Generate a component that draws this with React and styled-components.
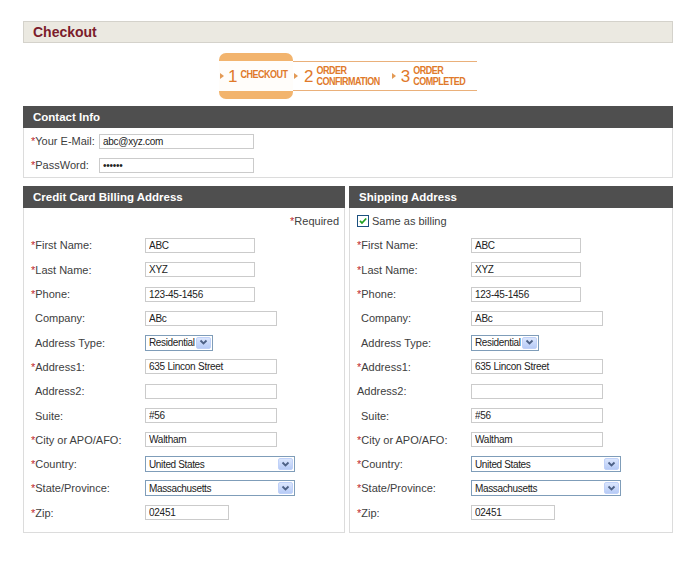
import React from "react";
import styled, { createGlobalStyle } from "styled-components";

const GlobalStyle = createGlobalStyle`
  body {
    margin: 0;
    background: #fff;
    font-family: "Liberation Sans", Arial, sans-serif;
  }
`;

const Page = styled.div`
  width: 650px;
  padding: 21px 0 0 23px;
`;

const TitleBar = styled.div`
  height: 20px;
  border: 1px solid #d4d2cb;
  background: #ebe9e1;
  display: flex;
  align-items: center;
  padding-left: 9px;
`;

const Title = styled.h1`
  margin: 0;
  font-size: 14px;
  font-weight: bold;
  color: #7b1c2b;
`;

const StepsWrap = styled.div`
  display: flex;
  justify-content: center;
  margin: 10px 0 7px;
`;

const Steps = styled.div`
  display: flex;
  height: 46px;
`;

const ActiveTab = styled.div`
  width: 74px;
  background: #f2b46e;
  border-radius: 7px;
  padding: 8px 0;
  box-sizing: border-box;
`;

const Band = styled.div`
  height: 30px;
  display: flex;
  align-items: center;
  background: ${(p) => (p.$active ? "#fffdfa" : "transparent")};
  border-top: ${(p) => (p.$active ? "none" : "1px solid #eab07a")};
  border-bottom: ${(p) => (p.$active ? "none" : "1px solid #eab07a")};
  box-sizing: border-box;
  margin: ${(p) => (p.$active ? "0" : "8px 0")};
  width: ${(p) => (p.$active ? "auto" : "184px")};
  padding-left: 1px;
`;

const Arrow = styled.span`
  width: 0;
  height: 0;
  border-top: 3px solid transparent;
  border-bottom: 3px solid transparent;
  border-left: 4px solid #e39a55;
  margin-right: ${(p) => p.$gap}px;
  margin-left: ${(p) => p.$before || 0}px;
`;

const StepNum = styled.span`
  font-size: 17px;
  color: #e0792a;
  margin-right: 3px;
  line-height: 1;
`;

const StepText = styled.span`
  display: inline-block;
  font-family: "Liberation Sans Narrow", "Liberation Sans", sans-serif;
  font-weight: bold;
  font-size: 9px;
  letter-spacing: -0.5px;
  line-height: 9.5px;
  color: #e0792a;
  white-space: nowrap;
  transform: scaleY(1.15);
`;

const Section = styled.section`
  display: flex;
  flex-direction: column;
`;

const SectionHeader = styled.div`
  height: 22px;
  background: #4f4f4f;
  color: #fff;
  font-weight: bold;
  font-size: 11.5px;
  padding-left: 10px;
  display: flex;
  align-items: center;
`;

const SectionBody = styled.div`
  border: 1px solid #dcdcdc;
  border-top: none;
  padding: ${(p) => p.$pad};
`;

const Columns = styled.div`
  display: grid;
  grid-template-columns: 322px 324px;
  column-gap: 4px;
  margin-top: 8px;
`;

const Row = styled.div`
  height: ${(p) => p.$h || 24.3}px;
  display: flex;
  align-items: center;
  justify-content: ${(p) => (p.$right ? "flex-end" : "flex-start")};
  font-size: 11px;
  color: #404040;
`;

const Label = styled.label`
  width: ${(p) => p.$w}px;
  flex-shrink: 0;
  font-size: 11px;
  color: #404040;
  padding-left: ${(p) => (p.$indent ? 4 : 0)}px;
  box-sizing: border-box;
  white-space: nowrap;
`;

const Star = styled.span`
  color: #c0282d;
`;

const TextInput = styled.input`
  width: ${(p) => p.$w}px;
  height: 15px;
  box-sizing: border-box;
  border: 1px solid #cbcbcb;
  padding: 0 3px;
  margin: 0;
  font-family: "Liberation Sans", Arial, sans-serif;
  font-size: 10px;
  letter-spacing: -0.25px;
  color: #222;
  background: #fff;
  outline: none;
`;

const Select = styled.div`
  width: ${(p) => p.$w}px;
  height: 16px;
  box-sizing: border-box;
  border: 1px solid #7f9db9;
  display: flex;
  align-items: center;
  padding: 0 1px 0 3px;
  font-size: 10px;
  letter-spacing: -0.35px;
  color: #222;
  background: #fff;
  white-space: nowrap;
`;

const SelectBtn = styled.span`
  margin-left: auto;
  flex-shrink: 0;
  width: 15px;
  height: 12px;
  box-sizing: border-box;
  border: 1px solid #c0d1f8;
  border-radius: 2px;
  background: linear-gradient(#dbe6fd, #b7cbf6);
  display: flex;
  align-items: center;
  justify-content: center;
`;

const CheckRow = styled.label`
  display: flex;
  align-items: center;
  gap: 3px;
  font-size: 11px;
  color: #404040;
`;

const billing = [
  { label: "First Name:", req: true, value: "ABC", w: 110 },
  { label: "Last Name:", req: true, value: "XYZ", w: 110 },
  { label: "Phone:", req: true, value: "123-45-1456", w: 110 },
  { label: "Company:", value: "ABc", w: 132 },
  { label: "Address Type:", value: "Residential", w: 68, select: true },
  { label: "Address1:", req: true, value: "635 Lincon Street", w: 132 },
  { label: "Address2:", value: "", w: 132 },
  { label: "Suite:", value: "#56", w: 132 },
  { label: "City or APO/AFO:", req: true, value: "Waltham", w: 132 },
  { label: "Country:", req: true, value: "United States", w: 150, select: true },
  { label: "State/Province:", req: true, value: "Massachusetts", w: 150, select: true },
  { label: "Zip:", req: true, value: "02451", w: 84 },
];

const Chevron = () => (
  <svg width="9" height="7" viewBox="0 0 9 7">
    <path d="M1.5 1.5 L4.5 4.5 L7.5 1.5" fill="none" stroke="#4d6185" strokeWidth="1.8" />
  </svg>
);

const CheckIcon = () => (
  <svg width="12" height="12" viewBox="0 0 12 12">
    <rect x="0.5" y="0.5" width="11" height="11" fill="#fff" stroke="#1c5180" />
    <path d="M3 5.8 L5 8 L9.2 3.5" fill="none" stroke="#21a121" strokeWidth="1.8" />
  </svg>
);

function Field({ f, noIndent }) {
  return (
    <Row>
      <Label $w={114} $indent={!f.req && !noIndent}>
        {f.req && <Star>*</Star>}
        {f.label}
      </Label>
      {f.select ? (
        <Select $w={f.w}>
          {f.value}
          <SelectBtn>
            <Chevron />
          </SelectBtn>
        </Select>
      ) : (
        <TextInput $w={f.w} defaultValue={f.value} readOnly />
      )}
    </Row>
  );
}

export default function App() {
  return (
    <Page>
      <GlobalStyle />
      <TitleBar>
        <Title>Checkout</Title>
      </TitleBar>

      <StepsWrap>
        <Steps>
          <ActiveTab>
            <Band $active>
              <Arrow $gap={4} />
              <StepNum>1</StepNum>
              <StepText>CHECKOUT</StepText>
            </Band>
          </ActiveTab>
          <Band>
            <Arrow $gap={6} />
            <StepNum>2</StepNum>
            <StepText>
              ORDER
              <br />
              CONFIRMATION
            </StepText>
            <Arrow $gap={5} $before={12} />
            <StepNum>3</StepNum>
            <StepText>
              ORDER
              <br />
              COMPLETED
            </StepText>
          </Band>
        </Steps>
      </StepsWrap>

      <Section>
        <SectionHeader>Contact Info</SectionHeader>
        <SectionBody $pad="1px 0 0 7px">
          <Row $h={24}>
            <Label $w={68}>
              <Star>*</Star>Your E-Mail:
            </Label>
            <TextInput $w={155} defaultValue="abc@xyz.com" readOnly />
          </Row>
          <Row $h={24}>
            <Label $w={68}>
              <Star>*</Star>PassWord:
            </Label>
            <TextInput $w={155} type="password" defaultValue="abcdef" readOnly />
          </Row>
        </SectionBody>
      </Section>

      <Columns>
        <Section>
          <SectionHeader>Credit Card Billing Address</SectionHeader>
          <SectionBody $pad="1px 5px 7px 7px">
            <Row $right>
              <span>
                <Star>*</Star>Required
              </span>
            </Row>
            {billing.map((f) => (
              <Field key={f.label} f={f} />
            ))}
          </SectionBody>
        </Section>
        <Section>
          <SectionHeader>Shipping Address</SectionHeader>
          <SectionBody $pad="1px 5px 7px 7px">
            <Row>
              <CheckRow>
                <CheckIcon />
                Same as billing
              </CheckRow>
            </Row>
            {billing.map((f) => (
              <Field key={f.label} f={f} noIndent={f.label === "Address2:"} />
            ))}
          </SectionBody>
        </Section>
      </Columns>
    </Page>
  );
}
